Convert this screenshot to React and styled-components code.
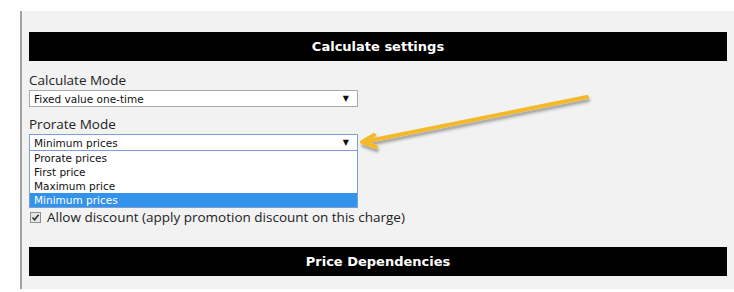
import React from 'react';
import styled, { createGlobalStyle } from 'styled-components';

const GlobalStyle = createGlobalStyle`
  html, body {
    margin: 0;
    padding: 0;
    background: #ffffff;
  }
`

const Page = styled.div`
  position: relative;
  width: 734px;
  height: 292px;
  padding: 11px 0 0 20px;
  box-sizing: border-box;
  overflow: hidden;
`
const Panel = styled.div`
  height: 278px;
  box-sizing: border-box;
  border-left: 2px solid #a3a3a3;
  background-color: #f2f2f2;
  padding: 21px 7px 0 7px;
`
const SectionBar = styled.div`
  height: 29px;
  background-color: #000;
  color: #fff;
  display: flex;
  align-items: center;
  justify-content: center;
  font-family: "DejaVu Sans", Verdana, sans-serif;
  font-weight: bold;
  font-size: 13px;
  margin-top: ${p => p.$gap || 0}px;
`
const Label = styled.div`
  font-family: "Open Sans", "Segoe UI", sans-serif;
  font-size: 13.5px;
  line-height: 19px;
  color: #222;
  margin-top: ${p => p.$gap || 0}px;
`
const SelectWrap = styled.div`
  position: relative;
  width: 329px;
`
const SelectBox = styled.div`
  height: 17px;
  box-sizing: border-box;
  border: 1px solid ${p => (p.$focused ? '#7b9fd4' : '#a9a9a9')};
  background: #fff;
  display: flex;
  align-items: center;
  justify-content: space-between;
  padding: 0 8px 0 4px;
  font-family: "DejaVu Sans", Verdana, sans-serif;
  font-size: 10.5px;
  color: #111;
`
const Caret = styled.span`
  font-size: 8px;
  color: #111;
`
const OptionList = styled.div`
  position: absolute;
  left: 0;
  top: 16px;
  width: 329px;
  box-sizing: border-box;
  border: 1px solid #7b9fd4;
  background: #fff;
  z-index: 2;
`
const Option = styled.div`
  height: 14px;
  line-height: 14px;
  padding-left: 4px;
  font-family: "DejaVu Sans", Verdana, sans-serif;
  font-size: 10.5px;
  color: ${p => (p.$selected ? '#fff' : '#111')};
  background: ${p => (p.$selected ? '#3392ea' : 'transparent')};
`
const CheckRow = styled.div`
  display: flex;
  align-items: center;
  gap: 6px;
  margin-top: 57px;
  padding-left: 1px;
  font-family: "Open Sans", "Segoe UI", sans-serif;
  font-size: 13.5px;
  line-height: 18px;
  color: #222;
`
const Box = styled.span`
  width: 11px;
  height: 11px;
  box-sizing: border-box;
  border: 1px solid #8f8f8f;
  background: #e6e6e6;
  display: flex;
  align-items: center;
  justify-content: center;
`
const Overlay = styled.svg`
  position: absolute;
  left: 0;
  top: 0;
  pointer-events: none;
  z-index: 3;
`

const Select = ({ value, focused, options }) => (
  <SelectWrap>
    <SelectBox $focused={focused}>
      <span>{value}</span>
      <Caret>▼</Caret>
    </SelectBox>
    {options && (
      <OptionList>
        {options.map(o => (
          <Option key={o} $selected={o === value}>{o}</Option>
        ))}
      </OptionList>
    )}
  </SelectWrap>
)

const App = () => {
  return (
    <Page>
      <GlobalStyle />
      <Panel>
        <SectionBar>Calculate settings</SectionBar>
        <Label $gap={10}>Calculate Mode</Label>
        <Select value="Fixed value one-time" />
        <Label $gap={8}>Prorate Mode</Label>
        <Select
          focused
          value="Minimum prices"
          options={['Prorate prices', 'First price', 'Maximum price', 'Minimum prices']}
        />
        <CheckRow>
          <Box>
            <svg width="9" height="9" viewBox="0 0 9 9">
              <path d="M1.5 4.5 L3.6 6.8 L7.6 1.8" fill="none" stroke="#333" strokeWidth="1.6" />
            </svg>
          </Box>
          <span>Allow discount (apply promotion discount on this charge)</span>
        </CheckRow>
        <SectionBar $gap={21}>Price Dependencies</SectionBar>
      </Panel>
      <Overlay width="734" height="292" viewBox="0 0 734 292">
        <defs>
          <filter id="sh" x="-10%" y="-50%" width="120%" height="200%">
            <feDropShadow dx="1" dy="3" stdDeviation="1.5" floodColor="#000" floodOpacity="0.35" />
          </filter>
        </defs>
        <g filter="url(#sh)" stroke="#f3b92a" strokeLinecap="round" strokeLinejoin="round" fill="none">
          <path d="M587 97 L368 141" strokeWidth="4" />
          <path d="M374 135 L362 142 L376 147" strokeWidth="4" />
        </g>
      </Overlay>
    </Page>
  )
}

export default App;
